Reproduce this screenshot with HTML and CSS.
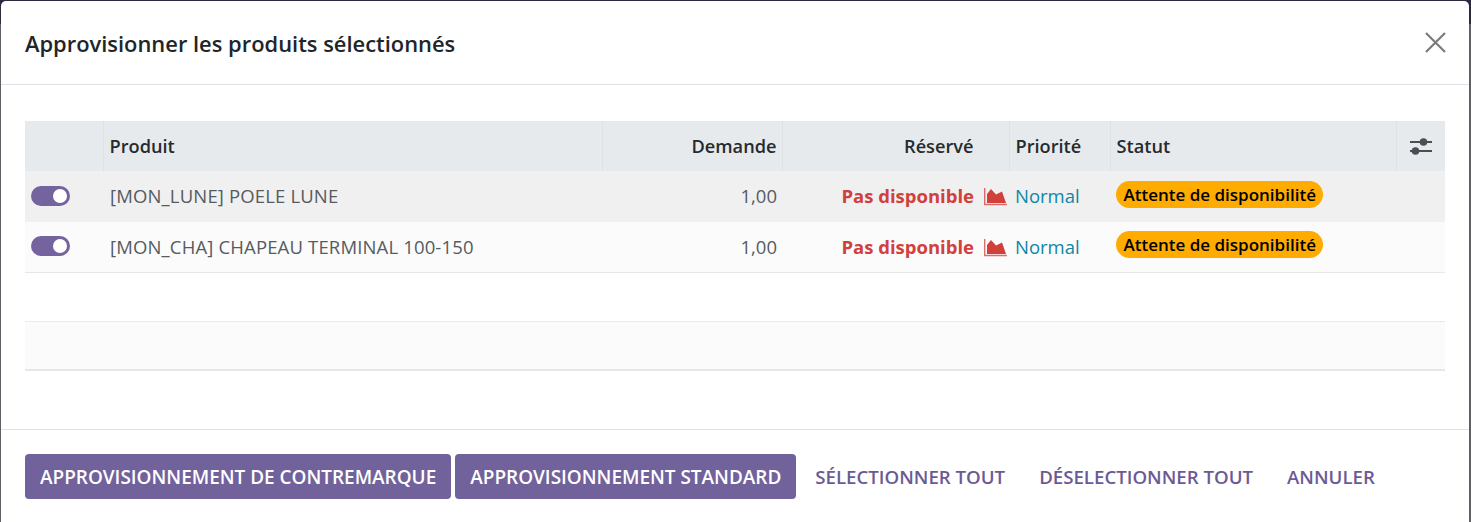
FILE: index.html
```html
<!DOCTYPE html>
<html lang="fr">
<head>
    <meta charset="UTF-8">
    <title>Approvisionner les produits sélectionnés</title>
    <link rel="stylesheet" href="styles.css">
</head>
<body>
    <div class="modal">
        <header class="modal-header">
            <h4>Approvisionner les produits sélectionnés</h4>
            <button class="close" type="button" aria-label="Fermer">
                <svg width="21" height="21" viewBox="0 0 21 21"><path d="M1 1 20 20M20 1 1 20" stroke="#7b7b7b" stroke-width="2.2" fill="none"/></svg>
            </button>
        </header>

        <div class="modal-body">
            <table class="list">
                <colgroup>
                    <col class="c-toggle">
                    <col class="c-product">
                    <col class="c-demand">
                    <col class="c-reserved">
                    <col class="c-priority">
                    <col class="c-status">
                    <col class="c-options">
                </colgroup>
                <thead>
                    <tr>
                        <th></th>
                        <th>Produit</th>
                        <th class="num">Demande</th>
                        <th class="num reserved-head">Réservé</th>
                        <th>Priorité</th>
                        <th>Statut</th>
                        <th class="options">
                            <svg width="22" height="18" viewBox="0 0 22 18"><path d="M0 4H22M0 13H22" stroke="#4a4f55" stroke-width="2"/><circle cx="13.5" cy="4" r="3.8" fill="#4a4f55"/><circle cx="5.5" cy="13" r="3.8" fill="#4a4f55"/></svg>
                        </th>
                    </tr>
                </thead>
                <tbody>
                    <tr class="row odd">
                        <td><span class="toggle"></span></td>
                        <td class="product">[MON_LUNE] POELE LUNE</td>
                        <td class="num">1,00</td>
                        <td class="num"><span class="unavailable">Pas disponible</span><svg class="chart" width="23" height="18" viewBox="0 0 23 18"><path d="M3 15V6L7 1l5 5.5 6-3L22 15Z" fill="#d1403b"/><path d="M.7 0v16.5H23" stroke="#d1403b" stroke-width="1.4" fill="none" opacity=".75"/></svg></td>
                        <td class="priority">Normal</td>
                        <td><span class="badge">Attente de disponibilité</span></td>
                        <td></td>
                    </tr>
                    <tr class="row even">
                        <td><span class="toggle"></span></td>
                        <td class="product">[MON_CHA] CHAPEAU TERMINAL 100-150</td>
                        <td class="num">1,00</td>
                        <td class="num"><span class="unavailable">Pas disponible</span><svg class="chart" width="23" height="18" viewBox="0 0 23 18"><path d="M3 15V6L7 1l5 5.5 6-3L22 15Z" fill="#d1403b"/><path d="M.7 0v16.5H23" stroke="#d1403b" stroke-width="1.4" fill="none" opacity=".75"/></svg></td>
                        <td class="priority">Normal</td>
                        <td><span class="badge">Attente de disponibilité</span></td>
                        <td></td>
                    </tr>
                    <tr class="blank"><td colspan="7"></td></tr>
                    <tr class="blank shaded"><td colspan="7"></td></tr>
                </tbody>
            </table>
        </div>

        <footer class="modal-footer">
            <button class="btn primary" type="button">APPROVISIONNEMENT DE CONTREMARQUE</button>
            <button class="btn primary" type="button">APPROVISIONNEMENT STANDARD</button>
            <button class="btn link" type="button">SÉLECTIONNER TOUT</button>
            <button class="btn link" type="button">DÉSELECTIONNER TOUT</button>
            <button class="btn link" type="button">ANNULER</button>
        </footer>
    </div>
</body>
</html>
```

FILE: styles.css
```css
* {
    margin: 0;
    padding: 0;
    box-sizing: border-box;
}

body {
    background: linear-gradient(#2b2a3f 0 24px, #5f5f66 24px);
    font-family: "Open Sans", "Noto Sans", sans-serif;
    color: #212529;
    height: 522px;
    overflow: hidden;
}

.modal {
    margin: 1px 2px 0 1px;
    height: 521px;
    background: #fff;
    border-radius: 5px 5px 0 0;
}

.modal-header {
    height: 84px;
    padding: 0 24px;
    display: flex;
    align-items: center;
    justify-content: space-between;
    border-bottom: 1px solid #dee2e6;
}

.modal-header h4 {
    margin-top: 2px;
    font-size: 21.9px;
    font-weight: 600;
    color: #212529;
}

.close {
    background: none;
    border: none;
    display: flex;
    margin-right: -1px;
}

.modal-body {
    height: 344px;
    padding: 36px 24px 0;
}

.list {
    width: 1420px;
    border-collapse: collapse;
    table-layout: fixed;
    font-size: 18.5px;
}

.c-toggle { width: 78px; }
.c-product { width: 499px; }
.c-demand { width: 180px; }
.c-reserved { width: 227px; }
.c-priority { width: 101px; }
.c-status { width: 286px; }
.c-options { width: 49px; }

thead tr {
    height: 50px;
    background: #e7eaed;
}

th {
    font-weight: 600;
    text-align: left;
    padding: 0 5px 0 6px;
    border-left: 1px solid #dee2e6;
    font-size: 18.2px;
    color: #262a2e;
}

th:first-child {
    border-left: none;
}

td {
    padding: 0 5px 1px 6px;
    color: #555b61;
    white-space: nowrap;
}

.odd td {
    padding-bottom: 2px;
}

td.product {
    padding-left: 7px;
    letter-spacing: 0.15px;
}

.num {
    text-align: right;
}

.reserved-head {
    padding-right: 35px;
}

.options {
    text-align: center;
    line-height: 0;
    padding-top: 1px;
}

.row {
    height: 51px;
    border-bottom: 1px solid #e5e7e9;
}

.row.odd {
    background: #f0f0f0;
    border-bottom: none;
}

.row.even {
    height: 50px;
    background: #fbfbfb;
}

.blank {
    height: 49px;
    border-bottom: 1px solid #e9eaeb;
}

.blank.shaded {
    background: #fbfbfb;
    border-bottom: 2px solid #e5e7e9;
}

.toggle {
    display: block;
    position: relative;
    width: 39px;
    height: 20px;
    background: #74639e;
    border-radius: 10px;
}

.toggle::after {
    content: "";
    position: absolute;
    right: 3px;
    top: 3px;
    width: 14px;
    height: 14px;
    border-radius: 50%;
    background: #fff;
}

.unavailable {
    color: #d1403b;
    font-weight: 700;
}

.chart {
    margin: 0 -3px 0 10px;
    vertical-align: -3px;
}

.priority {
    color: #0f86a8;
}

.badge {
    display: inline-block;
    height: 27px;
    line-height: 27px;
    margin-bottom: 3px;
    padding: 0 7.5px;
    border-radius: 14px;
    background: #ffab00;
    color: #000;
    font-size: 17px;
    font-weight: 600;
    vertical-align: middle;
}

.modal-footer {
    height: 92px;
    padding: 24px 24px 0;
    display: flex;
    align-items: flex-start;
    gap: 4px;
    border-top: 1px solid #dee2e6;
}

.btn {
    height: 45px;
    padding: 0 15px;
    border: none;
    border-radius: 4px;
    font-family: inherit;
    font-size: 18.95px;
    font-weight: 600;
    white-space: nowrap;
}

.btn.primary {
    background: #72629c;
    color: #fff;
}

.btn.link {
    background: none;
    color: #6b5b95;
    font-size: 18.65px;
}
```
